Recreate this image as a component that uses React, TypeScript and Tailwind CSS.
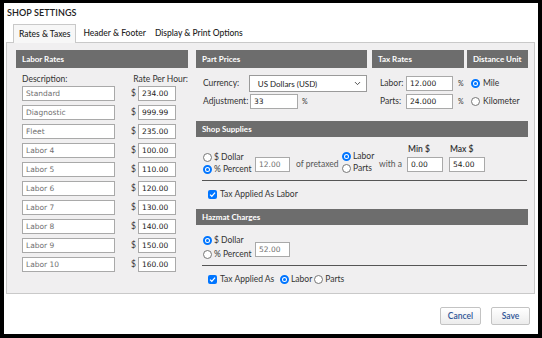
import { ChevronDown } from 'lucide-react';

const labor = [
    ['Standard', '234.00'],
    ['Diagnostic', '999.99'],
    ['Fleet', '235.00'],
    ['Labor 4', '100.00'],
    ['Labor 5', '110.00'],
    ['Labor 6', '120.00'],
    ['Labor 7', '130.00'],
    ['Labor 8', '140.00'],
    ['Labor 9', '150.00'],
    ['Labor 10', '160.00'],
];

function Radio({ checked = false }: { checked?: boolean }) {
    return (
        <span
            className={
                checked
                    ? 'w-[9px] h-[9px] shrink-0 rounded-full border-2 border-[#0075ff] bg-white flex items-center justify-center'
                    : 'w-[9px] h-[9px] shrink-0 rounded-full border border-[#767676] bg-white'
            }
        >
            {checked && <span className="w-[3px] h-[3px] rounded-full bg-[#0075ff]" />}
        </span>
    );
}

function Check() {
    return (
        <span className="w-[9px] h-[9px] shrink-0 rounded-[2px] bg-[#0075ff] flex items-center justify-center">
            <svg width="7" height="7" viewBox="0 0 10 10">
                <path d="M1.5 5.2 L4 7.6 L8.6 2.4" stroke="white" strokeWidth="1.8" fill="none" />
            </svg>
        </span>
    );
}

function Field({ value, w, muted = false }: { value: string; w: string; muted?: boolean }) {
    return (
        <div
            className={`${w} h-[15px] shrink-0 border border-[#a9a9a9] bg-white pl-[3px] flex items-center font-['DejaVu_Sans',sans-serif] text-[7.5px] ${
                muted ? 'text-[#707070]' : 'text-[#222]'
            }`}
        >
            {value}
        </div>
    );
}

function Bar({ title, h = 'h-[18px]' }: { title: string; h?: string }) {
    return (
        <div className={`${h} bg-[#6d6d6d] text-white font-bold text-[8px] pl-[6px] flex items-center`}>{title}</div>
    );
}

export default function App() {
    return (
        <div className="w-[542px] h-[338px] bg-black pt-[3px] px-[4px] pb-[4px] font-['Lato',sans-serif] text-[#333] whitespace-nowrap">
            <div className="w-full h-full bg-white pl-[2px] pr-[3px] flex flex-col">
                <div className="ml-[1px] mt-[4px] leading-[12px] text-[9px] font-semibold text-[#222] tracking-[0.1px]">SHOP SETTINGS</div>

                {/* tabs */}
                <div className="mt-[5px] ml-[7px] flex items-end h-[18px] text-[8.5px] text-[#222]">
                    <div className="h-[19px] -mb-px relative z-10 border border-b-0 border-[#c9c9c9] bg-[#f7f7f7] px-[5px] flex items-center font-medium">
                        Rates &amp; Taxes
                    </div>
                    <div className="h-[18px] px-[7px] flex items-center font-medium">Header &amp; Footer</div>
                    <div className="h-[18px] px-[2px] flex items-center font-medium">Display &amp; Print Options</div>
                </div>

                {/* panel */}
                <div className="h-[252px] border border-[#c9c9c9] bg-[#f0eff0] pt-[7px] pl-[9px] pr-[6px] flex gap-[8px]">
                    {/* labor rates */}
                    <div className="w-[172px] shrink-0">
                        <Bar title="Labor Rates" />
                        <div className="mt-[5px] pl-[6px] flex leading-[12px] text-[8.5px]">
                            <span className="w-[116px]">Description:</span>
                            <span>Rate Per Hour:</span>
                        </div>
                        <div className="mt-[1px] pl-[6px] flex flex-col gap-[4px]">
                            {labor.map(([name, rate]) => (
                                <div key={name} className="flex items-center">
                                    <Field value={name} w="w-[93px]" muted />
                                    <span className="ml-[16px] w-[7px] text-[8.5px]">$</span>
                                    <Field value={rate} w="w-[38px]" />
                                </div>
                            ))}
                        </div>
                    </div>

                    {/* right side */}
                    <div className="w-[332px] shrink-0 flex flex-col text-[8.5px]">
                        <div className="flex">
                            <div className="w-[171px] shrink-0">
                                <Bar title="Part Prices" />
                                <div className="mt-[7px] pl-[7px] flex items-center">
                                    <span className="w-[47px]">Currency:</span>
                                    <div className="w-[121px] h-[17px] border border-[#9a9a9a] bg-white pl-[8px] pr-[4px] flex items-center justify-between text-[8px] text-[#222] relative z-10">
                                        <span>US Dollars (USD)</span>
                                        <ChevronDown size={9} strokeWidth={2.5} className="text-[#444]" />
                                    </div>
                                </div>
                                <div className="mt-[2px] pl-[7px] flex items-center">
                                    <span className="w-[47px]">Adjustment:</span>
                                    <Field value="33" w="w-[48px]" />
                                    <span className="ml-[4px] text-[7px]">%</span>
                                </div>
                            </div>
                            <div className="w-[92px] ml-[5px] shrink-0">
                                <Bar title="Tax Rates" />
                                <div className="mt-[8px] pl-[8px] flex flex-col gap-[3px]">
                                    <div className="flex items-center">
                                        <span className="w-[26px]">Labor:</span>
                                        <Field value="12.000" w="w-[47px]" />
                                        <span className="ml-[5px] text-[7px]">%</span>
                                    </div>
                                    <div className="flex items-center">
                                        <span className="w-[26px]">Parts:</span>
                                        <Field value="24.000" w="w-[47px]" />
                                        <span className="ml-[5px] text-[7px]">%</span>
                                    </div>
                                </div>
                            </div>
                            <div className="w-[61px] ml-[3px] shrink-0">
                                <Bar title="Distance Unit" />
                                <div className="mt-[8px] pl-[4px] flex flex-col gap-[3px]">
                                    <div className="h-[15px] flex items-center gap-[3px]">
                                        <Radio checked />
                                        <span>Mile</span>
                                    </div>
                                    <div className="h-[15px] flex items-center gap-[3px]">
                                        <Radio />
                                        <span>Kilometer</span>
                                    </div>
                                </div>
                            </div>
                        </div>

                        {/* shop supplies */}
                        <div className="mt-[12px]">
                            <Bar title="Shop Supplies" h="h-[16px]" />
                        </div>
                        <div className="mt-[6px] pl-[7px] flex items-end">
                            <div className="w-[52px] shrink-0 flex flex-col">
                                <div className="h-[12px] flex items-center gap-[2px]">
                                    <Radio />
                                    <span>$ Dollar</span>
                                </div>
                                <div className="h-[12px] flex items-center gap-[2px]">
                                    <Radio checked />
                                    <span>% Percent</span>
                                </div>
                            </div>
                            <div className="mb-[3px]">
                                <Field value="12.00" w="w-[35px]" muted />
                            </div>
                            <span className="w-[52px] shrink-0 pl-[6px] mb-[5px] leading-[12px] text-[#555]">of pretaxed</span>
                            <div className="w-[37px] shrink-0 flex flex-col mb-[1px]">
                                <div className="h-[12px] flex items-center gap-[2px]">
                                    <Radio checked />
                                    <span>Labor</span>
                                </div>
                                <div className="h-[12px] flex items-center gap-[2px]">
                                    <Radio />
                                    <span>Parts</span>
                                </div>
                            </div>
                            <span className="w-[28px] shrink-0 mb-[5px] leading-[12px] text-[#555]">with a</span>
                            <div className="flex flex-col mb-[3px]">
                                <span className="pl-[1px] leading-[12px] font-semibold">Min $</span>
                                <div className="mt-[2px]">
                                    <Field value="0.00" w="w-[36px]" />
                                </div>
                            </div>
                            <div className="ml-[6px] flex flex-col mb-[3px]">
                                <span className="pl-[1px] leading-[12px] font-semibold">Max $</span>
                                <div className="mt-[2px]">
                                    <Field value="54.00" w="w-[36px]" />
                                </div>
                            </div>
                        </div>
                        <div className="mt-[5px] ml-[6px] mr-[1px] h-px bg-[#555]" />
                        <div className="mt-[7px] pl-[12px] h-[12px] flex items-center gap-[3px]">
                            <Check />
                            <span>Tax Applied As Labor</span>
                        </div>

                        {/* hazmat */}
                        <div className="mt-[9px]">
                            <Bar title="Hazmat Charges" h="h-[16px]" />
                        </div>
                        <div className="mt-[8px] pl-[7px] flex items-end">
                            <div className="w-[52px] shrink-0 flex flex-col">
                                <div className="h-[14px] flex items-center gap-[2px]">
                                    <Radio checked />
                                    <span>$ Dollar</span>
                                </div>
                                <div className="h-[14px] flex items-center gap-[2px]">
                                    <Radio />
                                    <span>% Percent</span>
                                </div>
                            </div>
                            <div className="mb-[4px]">
                                <Field value="52.00" w="w-[35px]" muted />
                            </div>
                        </div>
                        <div className="mt-[4px] ml-[6px] mr-[1px] h-px bg-[#555]" />
                        <div className="mt-[7px] pl-[12px] h-[12px] flex items-center">
                            <Check />
                            <span className="ml-[3px] w-[60px]">Tax Applied As</span>
                            <Radio checked />
                            <span className="ml-[2px]">Labor</span>
                            <div className="ml-[2px] flex items-center">
                                <Radio />
                            </div>
                            <span className="ml-[2px]">Parts</span>
                        </div>
                    </div>
                </div>

                {/* buttons */}
                <div className="mt-[13px] pr-[5px] flex justify-end gap-[10px]">
                    <button className="w-[41px] h-[18px] border border-[#c3c3c3] rounded-[2px] bg-gradient-to-b from-white to-[#ececec] text-[8.5px] font-semibold text-[#2f5597]">
                        Cancel
                    </button>
                    <button className="w-[39px] h-[18px] border border-[#c3c3c3] rounded-[2px] bg-gradient-to-b from-white to-[#ececec] text-[8.5px] font-semibold text-[#2f5597]">
                        Save
                    </button>
                </div>
            </div>
        </div>
    );
}
